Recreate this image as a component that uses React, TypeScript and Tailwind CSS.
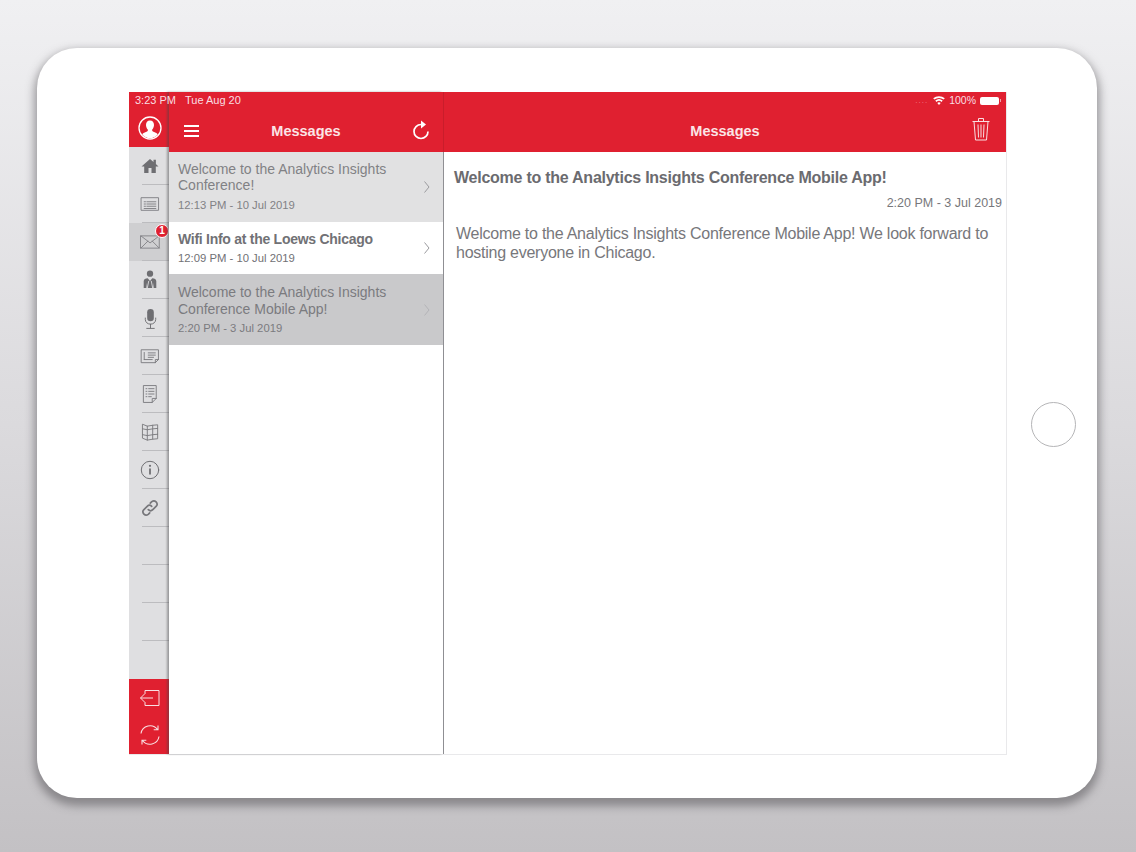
import React from "react";

const G = "#6e6e72";

function Ic({ children, w = 24, h = 24, vb = "0 0 24 24", c = G, sw = 1 }: any) {
  return (
    <svg width={w} height={h} viewBox={vb} fill="none" stroke={c} strokeWidth={sw} strokeLinecap="round" strokeLinejoin="round">
      {children}
    </svg>
  );
}

const railIcons: React.ReactNode[] = [
  <Ic key="home"><path d="M3.500 12.500 12 5l3.500 3V5.800h2.400v4.300l2.600 2.400h-2.700V19h-4.300v-5h-3v5H6.200v-6.500z" fill={G} stroke="none" /></Ic>,
  <Ic key="agenda" w={20} h={18} vb="0 0 22 20" c="#7c7c80"><path d="M1.500 3h19v14h-19zM4.500 7.500h1.500M7.500 7.500h10M4.500 10h1.500M7.500 10h10M4.500 12.500h1.500M7.500 12.500h10M4.500 15h13" /></Ic>,
  <Ic key="mail" w={21} h={16} vb="0 0 24 18" c="#7f7f83"><path d="M1 2h21v14H1zM1 2l10.500 8L22 2M1 16l8-8M22 16l-8-8" /></Ic>,
  <Ic key="person" w={18} h={22} vb="0 0 20 24"><circle cx="10" cy="5" r="3.500" fill={G} stroke="none" /><path d="M3 21v-7.500C3 11 5 10 7.500 10l2.500 3 2.500-3c2.500 0 4.500 1 4.500 3.500V21h-3v-6l-.8 6H6.800L6 15v6z" fill={G} stroke="none" /><path d="M8.500 13.500 7 21M11.500 13.500 13 21" stroke="#e0e0e2" strokeWidth="1" /></Ic>,
  <Ic key="mic" w={17} h={23} vb="0 0 18 24"><rect x="5.500" y="2" width="7" height="13" rx="3.500" fill={G} stroke="none" /><path d="M3.500 11.500V13c0 3 2.500 5 5.500 5s5.500-2 5.500-5v-1.500M9 18v4M5 22.500h8" /></Ic>,
  <Ic key="news" w={20} h={16} vb="0 0 22 18" c="#77777b"><path d="M1.500 2h19v11l-3.500 3.500H1.500zM17 16.500V13h3.500M4.500 5v8M9 5.500h8M9 8h8M9 10.500h6M4.500 13h9" /></Ic>,
  <Ic key="doc" w={16} h={20} vb="0 0 18 22" c="#77777b"><path d="M2 1.500h14v14.500l-4.500 4.500H2zM11.500 20.500V16H16M4.500 5h1M7.500 5h6M4.500 8h1M7.500 8h6M4.500 11h1M7.500 11h6M4.500 14h1M7.500 14h3" /></Ic>,
  <Ic key="map" w={18} h={18} vb="0 0 20 20" c="#77777b"><path d="M2 1.500 7 3.500l6-1 5.500-.5v15.500l-5.500.5-6 1-5-2zM7 3.500v15.500M13 2.500v15.500M2 6.500l5 1 6-1 5.500-.5M2 13l5 1 6-1 5.500-.5" /></Ic>,
  <Ic key="info" w={20} h={20} vb="0 0 20 20" c="#707074"><circle cx="10" cy="10" r="8.700" /><circle cx="10" cy="5.800" r="1.100" fill={G} stroke="none" /><path d="M10 8.500v6" strokeWidth="1.800" strokeLinecap="butt" /></Ic>,
  <Ic key="link" w={20} h={20} vb="0 0 20 20" c="#77777b" sw={1.700}><path d="M8.300 11.700a3.200 3.200 0 0 0 4.500 0l3.500-3.500a3.200 3.200 0 0 0-4.500-4.500l-1.500 1.500" /><path d="M11.700 8.300a3.200 3.200 0 0 0-4.500 0l-3.500 3.500a3.200 3.200 0 0 0 4.500 4.500l1.500-1.500" /></Ic>,
  null,
  null,
  null,
];

function Chevron({ light = false }: { light?: boolean }) {
  return (
    <svg width="6" height="12" viewBox="0 0 6 12" fill="none" stroke={light ? "#b4b4b7" : "#9a9a9e"} strokeWidth="1" className="shrink-0">
      <path d="M.5 .5 5 6 .5 11.500" />
    </svg>
  );
}

function Row({ title, time, bg, h, bold, light, tc, extra = "" }: any) {
  return (
    <div className={`flex items-center pl-[9px] pr-[13px] ${bg} ${h}`}>
      <div className={`flex-1 min-w-0 ${extra}`}>
        <div className={`text-[14px] leading-[16.500px] ${bold ? "font-bold tracking-[-0.27px]" : ""} ${tc}`}>{title}</div>
        <div className={`mt-[4px] text-[11.300px] leading-[14px] ${tc}`}>{time}</div>
      </div>
      <Chevron light={light} />
    </div>
  );
}

export default function App() {
  return (
    <div
      className="h-[852px] w-[1136px] overflow-hidden pl-[37px] pt-[48px] bg-gradient-to-b from-[#f0f0f2] via-[#dbdadd] to-[#c3c1c4]"
      style={{ fontFamily: '"Liberation Sans", Arial, sans-serif' }}
    >
      <div className="flex h-[750px] w-[1060px] items-start rounded-[40px] bg-white pl-[92px] pt-[44px] shadow-[0_5px_9px_3px_rgba(80,78,82,0.5)]">
        {/* Screen */}
        <div className="relative flex h-[663px] w-[878px] shrink-0 border-b border-r border-[#e9e9eb]">
          {/* Status bar overlay */}
          <div className="absolute left-0 right-0 top-0 z-20 flex h-[17px] items-center pl-[6px] pr-[5px] text-[11px] text-[#f9dfe2]">
            <span>3:23 PM</span>
            <span className="ml-[9px]">Tue Aug 20</span>
            <span className="ml-auto flex items-center gap-[4px] text-[10.500px]">
              <span className="mr-[1px] text-[8px] leading-none tracking-[1px] text-[#ef7e88]">....</span>
              <svg width="12" height="9" viewBox="0 0 12 9" fill="#fff"><path d="M6 9 4.300 6.900a2.700 2.700 0 0 1 3.400 0zM3.400 5.900 2.300 4.600a5.800 5.800 0 0 1 7.400 0L8.600 5.900a4 4 0 0 0-5.200 0zM1.400 3.600.2 2.300a8.900 8.900 0 0 1 11.600 0l-1.200 1.300a7.100 7.100 0 0 0-9.200 0z" /></svg>
              <span>100%</span>
              <span className="flex items-center">
                <span className="h-[8px] w-[19px] rounded-[2px] bg-white" />
                <span className="ml-[1px] h-[3px] w-[1px] bg-[#f2a0a8]" />
              </span>
            </span>
          </div>

          {/* Rail */}
          <div className="flex w-[40px] shrink-0 flex-col bg-[#dfdfe1]">
            <div className="flex h-[55px] items-end justify-center bg-[#e02030] pb-[7px] pl-[2px]">
              <svg width="24" height="24" viewBox="0 0 24 24">
                <circle cx="12" cy="12" r="11" fill="#e02030" stroke="#fff" strokeWidth="1.300" />
                <path d="M12 4.500c2.600 0 4 2 4 4.500 0 1.800-.8 3.500-1.800 4.500v1.500c1 1 4.800 1.500 5.500 3.500a10 10 0 0 1-15.400 0c.7-2 4.500-2.500 5.500-3.500v-1.500C8.800 12.500 8 10.800 8 9c0-2.500 1.400-4.500 4-4.500z" fill="#fff" />
              </svg>
            </div>
            <div className="flex-1">
              {railIcons.map((ic, i) => (
                <div key={i} className={`relative flex h-[38px] items-center justify-center pl-[2px] ${i === 2 ? "bg-[#cfcfd1]" : ""}`}>
                  {ic}
                  <div className="absolute bottom-0 left-[13px] right-0 h-px bg-[#bcbcbf]" />
                  {i === 2 && (
                    <div className="absolute right-0 top-[1px] flex h-[14px] w-[14px] items-center justify-center rounded-full border border-white bg-[#e02030] text-[10px] font-bold leading-none text-white">1</div>
                  )}
                </div>
              ))}
            </div>
            <div className="bg-[#e02030]">
              <div className="flex h-[37px] items-center justify-center pl-[2px]">
                <svg width="22" height="18" viewBox="0 0 22 18" fill="none" stroke="#f9dfe2" strokeWidth="1">
                  <path d="M6 5V1.500h14v15H6V13M14 9H1.500M5.500 5 1.500 9l4 4" />
                </svg>
              </div>
              <div className="flex h-[38px] items-center justify-center pl-[2px]">
                <svg width="24" height="24" viewBox="0 0 24 24" fill="none" stroke="#f9dfe2" strokeWidth="1.100">
                  <path d="M3 10.500A9.200 9.200 0 0 1 19.500 6.500M20 2.500v4.300h-4.300M21 13.500A9.200 9.200 0 0 1 4.500 17.500M4 21.500v-4.300h4.300" />
                </svg>
              </div>
            </div>
          </div>

          {/* List */}
          <div className="z-10 flex w-[274px] shrink-0 flex-col bg-white shadow-[-2px_0_2px_rgba(70,70,74,0.45)]">
            <div className="flex h-[60px] shrink-0 items-end bg-[#e02030] pb-[12px] pl-[15px] pr-[13px]">
              <svg width="15" height="14" viewBox="0 0 15 14" className="mb-[2px]" stroke="#fff" strokeWidth="2"><path d="M0 2h15M0 7h15M0 12h15" /></svg>
              <span className="flex-1 pl-[1px] text-center text-[14.500px] font-bold leading-[17px] text-[#fbe4e6]">Messages</span>
              <svg width="18" height="21" viewBox="0 0 18 21" fill="none" stroke="#fff" strokeWidth="1.700">
                <path d="M9 5.500A7 7 0 1 0 16 12.500" />
                <path d="M9 1.500v8l5-4z" fill="#fff" stroke="none" />
              </svg>
            </div>
            <Row title={<>Welcome to the Analytics Insights<br />Conference!</>} time="12:13 PM - 10 Jul 2019" bg="bg-[#e1e1e2]" h="h-[70px]" tc="text-[#818185]" extra="pb-[2px]" />
            <Row title="Wifi Info at the Loews Chicago" time="12:09 PM - 10 Jul 2019" bg="bg-white" h="h-[52px]" bold tc="text-[#717175]" />
            <Row title={<>Welcome to the Analytics Insights<br />Conference Mobile App!</>} time="2:20 PM - 3 Jul 2019" bg="bg-[#c9c9cb]" h="h-[71px]" light tc="text-[#7b7b7f]" />
          </div>

          {/* Detail */}
          <div className="flex min-w-0 flex-1 flex-col bg-white">
            <div className="flex h-[60px] shrink-0 items-end border-l border-[#c91d2b] bg-[#e02030] pb-[12px] pr-[16px]">
              <span className="flex-1 pl-[34px] text-center text-[14.500px] font-bold leading-[17px] text-[#fbe4e6]">Messages</span>
              <svg width="18" height="24" viewBox="0 0 18 24" fill="none" stroke="#f9dfe2" strokeWidth="1" className="-mb-[1px]">
                <path d="M.5 4.500h17M6.500 4.500V1.500h5v3M2 4.500 3.500 23h11L16 4.500M6 7.500l.5 13M9 7.500v13M12 7.500l-.5 13" />
              </svg>
            </div>
            <div className="flex-1 border-l border-[#8f8f93] pl-[10px] pr-[4px] pt-[17px]">
              <div className="text-[16px] font-bold leading-[18px] tracking-[-0.25px] text-[#6b6b6f]">Welcome to the Analytics Insights Conference Mobile App!</div>
              <div className="mt-[9px] text-right text-[12.500px] leading-[15px] text-[#77777b]">2:20 PM - 3 Jul 2019</div>
              <div className="mt-[13px] pl-[2px] pr-[8px] text-[16px] leading-[19px] tracking-[-0.25px] text-[#77777b]">
                Welcome to the Analytics Insights Conference Mobile App! We look forward to hosting everyone in Chicago.
              </div>
            </div>
          </div>
        </div>

        {/* Home button */}
        <div className="ml-[24px] mt-[310px] h-[45px] w-[45px] shrink-0 rounded-full border-[1.500px] border-[#b5b5b7]" />
      </div>
    </div>
  );
}
